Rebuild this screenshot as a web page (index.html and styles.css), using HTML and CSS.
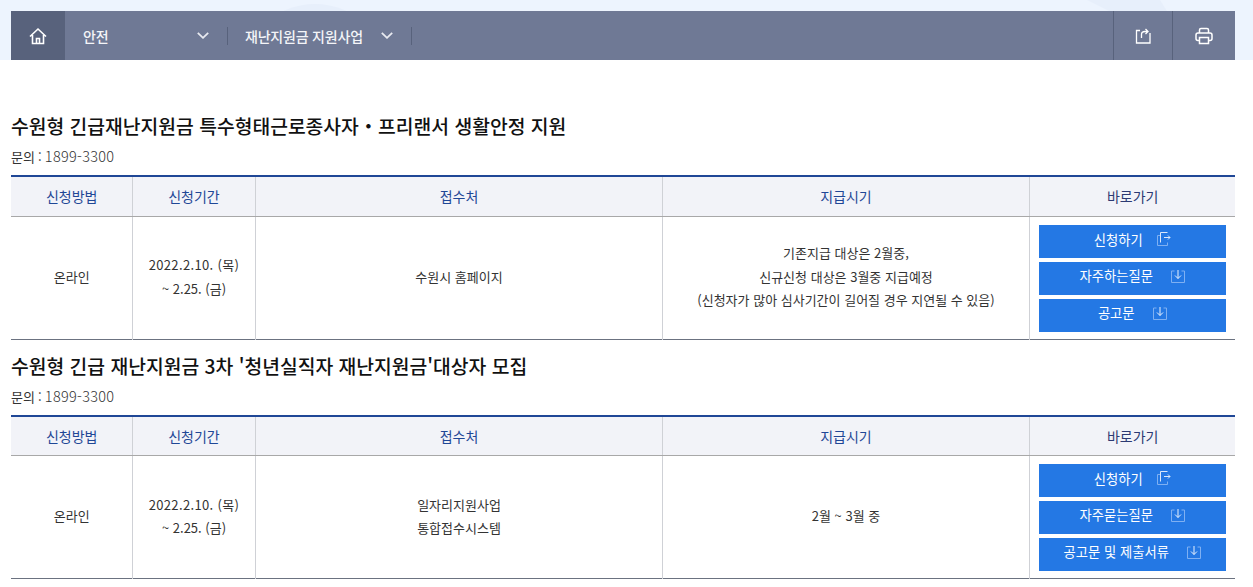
FILE: index.html
```html
<!DOCTYPE html>
<html lang="ko">
<head>
  <meta charset="UTF-8">
  <meta name="viewport" content="width=device-width, initial-scale=1.0">
  <title>수원형 긴급재난지원금</title>
  <link rel="stylesheet" href="styles.css">
</head>
<body>
  <div class="top">
    <div class="top-circle"></div>
    <div class="top-band"></div>
    <div class="nav">
      <a class="nav-home" href="#">
        <svg width="18" height="18" viewBox="0 0 18 18" fill="none" stroke="#fff" stroke-width="1.6"><path d="M1 9.500 9 2 17 9.500M3.500 8V16.500H14.500V8M7.500 16.500V11.500H10.500V16.500"/></svg>
      </a>
      <div class="nav-item nav-item-first">
        <span>안전</span>
        <svg class="chev" width="12" height="7" viewBox="0 0 12 7" fill="none" stroke="#e8eaf0" stroke-width="1.8"><path d="M.8.8 6 5.800 11.200.8"/></svg>
      </div>
      <div class="nav-item nav-item-second">
        <span>재난지원금 지원사업</span>
        <svg class="chev" width="12" height="7" viewBox="0 0 12 7" fill="none" stroke="#e8eaf0" stroke-width="1.8"><path d="M.8.8 6 5.800 11.200.8"/></svg>
      </div>
      <div class="nav-tools">
        <a class="nav-tool" href="#">
          <svg width="16" height="16" viewBox="0 0 16 16" fill="none" stroke="#fff" stroke-width="1.300"><path d="M5 2.500H1.500V15H15V5M6.500 10V6.500C6.500 4.500 8 3.500 10 3.500H13M10.500 1 13 3.500 10.500 6"/></svg>
        </a>
        <a class="nav-tool" href="#">
          <svg width="18" height="18" viewBox="0 0 18 18" fill="none" stroke="#fff" stroke-width="1.500"><path d="M4.500 13.500H3A2 2 0 0 1 1 11.500V8A2 2 0 0 1 3 6H15A2 2 0 0 1 17 8V11.500A2 2 0 0 1 15 13.500H13.500M4.500 6V3A1.500 1.500 0 0 1 6 1.500H12A1.500 1.500 0 0 1 13.500 3V6M4.500 10.500H13.500V16.500H4.500Z"/></svg>
        </a>
      </div>
    </div>
  </div>

  <div class="content">
    <section class="block block-first">
      <h2 class="block-title">수원형 긴급재난지원금 특수형태근로종사자・프리랜서 생활안정 지원</h2>
      <p class="block-tel">문의 : <span class="tel-num">1899-3300</span></p>
      <table class="info">
        <colgroup>
          <col class="c1"><col class="c2"><col class="c3"><col class="c4"><col class="c5">
        </colgroup>
        <thead>
          <tr><th>신청방법</th><th>신청기간</th><th>접수처</th><th>지급시기</th><th class="th-dark">바로가기</th></tr>
        </thead>
        <tbody>
          <tr>
            <td>온라인</td>
            <td class="date"><span class="date-from">2022.2.10. (목)</span><br>~ 2.25. (금)</td>
            <td>수원시 홈페이지</td>
            <td>기존지급 대상은 2월중,<br>신규신청 대상은 3월중 지급예정<br>(신청자가 많아 심사기간이 길어질 경우 지연될 수 있음)</td>
            <td class="links">
              <a class="btn btn-go" href="#">신청하기
                <svg class="btn-ico" width="14" height="14" viewBox="0 0 14 14" fill="none" stroke="#7fb0f2"><path d="M3.500 3.500H.5V13.500H10.500V10.500"/><path d="M3.500 10.500V.5H10.500M7 5.500H13M11 3.500 13 5.500 11 7.500" stroke="#dbe8fb"/></svg>
              </a>
              <a class="btn" href="#">자주하는질문
                <svg class="btn-ico" width="14" height="14" viewBox="0 0 14 14" fill="none" stroke="#7fb0f2"><path d="M3.500 2H.5V13.500H13.500V2H10.500"/><path d="M7 1V9.500M4 6.500 7 9.500 10 6.500" stroke="#e8f1fd"/></svg>
              </a>
              <a class="btn" href="#">공고문
                <svg class="btn-ico" width="14" height="14" viewBox="0 0 14 14" fill="none" stroke="#7fb0f2"><path d="M3.500 2H.5V13.500H13.500V2H10.500"/><path d="M7 1V9.500M4 6.500 7 9.500 10 6.500" stroke="#e8f1fd"/></svg>
              </a>
            </td>
          </tr>
        </tbody>
      </table>
    </section>

    <section class="block block-second">
      <h2 class="block-title">수원형 긴급 재난지원금 3차 '청년실직자 재난지원금'대상자 모집</h2>
      <p class="block-tel">문의 : <span class="tel-num">1899-3300</span></p>
      <table class="info">
        <colgroup>
          <col class="c1"><col class="c2"><col class="c3"><col class="c4"><col class="c5">
        </colgroup>
        <thead>
          <tr><th>신청방법</th><th>신청기간</th><th>접수처</th><th>지급시기</th><th class="th-dark">바로가기</th></tr>
        </thead>
        <tbody>
          <tr>
            <td>온라인</td>
            <td class="date"><span class="date-from">2022.2.10. (목)</span><br>~ 2.25. (금)</td>
            <td>일자리지원사업<br>통합접수시스템</td>
            <td>2월 ~ 3월 중</td>
            <td class="links">
              <a class="btn btn-go" href="#">신청하기
                <svg class="btn-ico" width="14" height="14" viewBox="0 0 14 14" fill="none" stroke="#7fb0f2"><path d="M3.500 3.500H.5V13.500H10.500V10.500"/><path d="M3.500 10.500V.5H10.500M7 5.500H13M11 3.500 13 5.500 11 7.500" stroke="#dbe8fb"/></svg>
              </a>
              <a class="btn" href="#">자주묻는질문
                <svg class="btn-ico" width="14" height="14" viewBox="0 0 14 14" fill="none" stroke="#7fb0f2"><path d="M3.500 2H.5V13.500H13.500V2H10.500"/><path d="M7 1V9.500M4 6.500 7 9.500 10 6.500" stroke="#e8f1fd"/></svg>
              </a>
              <a class="btn" href="#">공고문 및 제출서류
                <svg class="btn-ico" width="14" height="14" viewBox="0 0 14 14" fill="none" stroke="#7fb0f2"><path d="M3.500 2H.5V13.500H13.500V2H10.500"/><path d="M7 1V9.500M4 6.500 7 9.500 10 6.500" stroke="#e8f1fd"/></svg>
              </a>
            </td>
          </tr>
        </tbody>
      </table>
    </section>
  </div>
</body>
</html>
```

FILE: styles.css
```css
* {
  margin: 0;
  padding: 0;
  box-sizing: border-box;
}

body {
  font-family: 'Noto Sans CJK KR', 'Noto Sans', sans-serif;
  background-color: #fff;
  color: #333;
  font-size: 14px;
  overflow: hidden;
}

a {
  color: inherit;
  text-decoration: none;
}

.top {
  position: relative;
  height: 60px;
  padding: 11px 18px 0 11px;
  background-color: #edf4fe;
  overflow: hidden;
}

.top-circle {
  position: absolute;
  left: 240px;
  top: 4px;
  width: 150px;
  height: 150px;
  border-radius: 50%;
  background-color: #e7effb;
}

.top-band {
  position: absolute;
  left: 1087px;
  top: 0;
  width: 80px;
  height: 11px;
  background-color: #e7effb;
  clip-path: polygon(0 0, 73px 0, 80px 100%, 22px 100%);
}

.nav {
  position: relative;
  display: flex;
  align-items: center;
  height: 49px;
  background-color: #6f7995;
  color: #fff;
}

.nav-home {
  display: flex;
  align-items: center;
  justify-content: center;
  width: 54px;
  height: 100%;
  background-color: #58627c;
}

.nav-item {
  display: flex;
  align-items: center;
  justify-content: space-between;
  height: 18px;
  font-size: 14px;
  font-weight: 500;
  letter-spacing: -0.2px;
  color: #f4f5f8;
  border-right: 1px solid #58627c;
}

.nav-item-first {
  width: 163px;
  padding: 0 18px;
}

.nav-item-second {
  width: 184px;
  padding: 0 18px 0 17px;
}

.nav-tools {
  display: flex;
  height: 100%;
  margin-left: auto;
}

.nav-tool {
  display: flex;
  align-items: center;
  justify-content: center;
  width: 59px;
  height: 100%;
  border-left: 1px solid #58627c;
}

.nav-tool:last-child {
  width: 63px;
}

.content {
  padding: 0 18px 0 11px;
}

.block-first {
  padding-top: 51px;
}

.block-second {
  padding-top: 11px;
}

.block-title {
  font-size: 19.300px;
  font-weight: 500;
  line-height: 30px;
  color: #111;
}

.block-tel {
  margin-top: 6px;
  font-size: 13px;
  line-height: 20px;
  word-spacing: -0.5px;
  color: #333;
}

.tel-num {
  font-size: 14.500px;
  font-weight: 300;
  line-height: 1;
  letter-spacing: 0.3px;
}

.info {
  width: 100%;
  margin-top: 8px;
  border-collapse: collapse;
  table-layout: fixed;
  border-top: 2px solid #1f4796;
  border-bottom: 1px solid #6b7280;
}

.c1 { width: 121px; }
.c2 { width: 123px; }
.c3 { width: 407px; }
.c4 { width: 367px; }

.info th {
  height: 40px;
  padding-left: 1px;
  background-color: #f2f3f8;
  border-left: 1px solid #cfd1d6;
  border-bottom: 1px solid #a8a8a8;
  font-size: 14px;
  font-weight: 400;
  color: #1f4796;
}

.info th.th-dark {
  color: #2c3a73;
}

.info td {
  height: 123px;
  padding: 0 0 2px 1px;
  border-left: 1px solid #cfd1d6;
  font-size: 13px;
  line-height: 23.500px;
  text-align: center;
  color: #333;
}

.info th:first-child,
.info td:first-child {
  border-left: 0;
}

.date-from {
  letter-spacing: 0.35px;
}

.info td.links {
  padding: 2px 9px 0;
}

.block-second .info td.links {
  padding-top: 1px;
}

.btn {
  display: flex;
  align-items: center;
  justify-content: center;
  gap: 18px;
  height: 32.400px;
  margin-bottom: 4.600px;
  padding-bottom: 4px;
  background-color: #2478e4;
  color: #fff;
  font-size: 13.300px;
  line-height: 24px;
}

.btn-go {
  gap: 14px;
}

.btn:last-child {
  margin-bottom: 0;
}

.btn-ico {
  margin-top: -1px;
}
```
